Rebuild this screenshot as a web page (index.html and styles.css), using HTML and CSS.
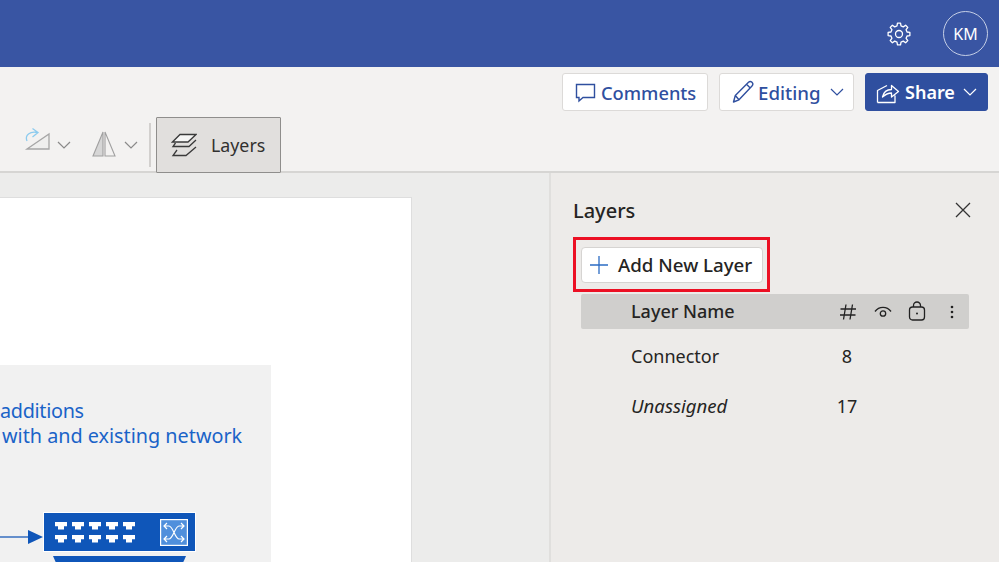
FILE: index.html
```html
<!DOCTYPE html>
<html lang="en">
<head>
<meta charset="utf-8">
<title>Layers</title>
<link rel="stylesheet" href="styles.css">
</head>
<body>
<header class="topbar">
  <svg class="gear" width="24" height="24" viewBox="0 0 24 24" fill="none" stroke="#fff" stroke-width="1.300" stroke-linejoin="round"><path d="M20.05 9.99L22.89 10.47V13.53L20.05 14.01L19.11 16.27L20.79 18.62L18.62 20.79L16.27 19.11L14.01 20.05L13.53 22.89H10.47L9.99 20.05L7.73 19.11L5.38 20.79L3.21 18.62L4.89 16.27L3.95 14.01L1.11 13.53V10.47L3.95 9.99L4.89 7.73L3.21 5.38L5.38 3.21L7.730 4.89L9.99 3.95L10.47 1.11H13.53L14.01 3.95L16.27 4.89L18.62 3.21L20.79 5.38L19.11 7.73z"/><circle cx="12" cy="12" r="3.500"/></svg>
  <div class="avatar">KM</div>
</header>
<section class="ribbon">
  <div class="ribbon-actions">
    <button class="action action-comments"><svg width="22" height="22" viewBox="0 0 22 22" fill="none" stroke="#2f4f9f" stroke-width="1.400"><path d="M1.500 3.500h18v13H8L4 20v-3.500H1.500z"/></svg>Comments</button>
    <button class="action action-edit"><svg width="24" height="24" viewBox="0 0 24 24" fill="none" stroke="#2f4f9f" stroke-width="1.400" stroke-linejoin="round"><path d="M2.500 22l1.800-6.500L17.500 2.300a2.500 2.500 0 0 1 3.500 0 2.600 2.600 0 0 1 0 3.600L8 19.800z M4.300 15.500L8 19.800 M15.500 4.300l4 4"/></svg>Editing<svg class="chev" width="14" height="14" viewBox="0 0 14 14" fill="none" stroke="#2f4f9f" stroke-width="1.200"><path d="M1 4l6 6 6-6"/></svg></button>
    <button class="action action-share"><svg width="24" height="24" viewBox="0 0 24 24" fill="none" stroke="#fff" stroke-width="1.300" stroke-linejoin="round"><path d="M1.500 22.500V10.500L11 5.500M1.500 22.500h17.500v-7M6.500 17c1-4.500 4.500-7.500 9-7.500V5.500l7 6-7 5.500v-4c-3.500 0-6 1.300-9 4z"/></svg>Share<svg class="chev" width="14" height="14" viewBox="0 0 14 14" fill="none" stroke="#fff" stroke-width="1.200"><path d="M1 4l6 6 6-6"/></svg></button>
  </div>
  <div class="ribbon-tools">
    <svg class="tool-icon" width="26" height="26" viewBox="0 0 26 26" fill="none"><path d="M2 20L24 5v15z" stroke="#a6a6a6" stroke-width="1.300" fill="#efefee"/><path d="M2 12C-.5 6 5 2 12.500 3.500M7.500-.5l5.500 4-5.500 4.500" stroke="#8ccbee" stroke-width="1.300"/></svg>
    <svg class="tool-chev" width="14" height="14" viewBox="0 0 14 14" fill="none" stroke="#8a8a8a" stroke-width="1.200"><path d="M1 4l6 6 6-6"/></svg>
    <svg class="tool-icon tool-flip" width="26" height="26" viewBox="0 0 26 26" fill="none" stroke="#a0a0a0" stroke-width="1.100"><path d="M11 1L1 25h10z" fill="#d6d6d6"/><path d="M13 1l10 24H13z" fill="#f3f2f1"/></svg>
    <svg class="tool-chev" width="14" height="14" viewBox="0 0 14 14" fill="none" stroke="#8a8a8a" stroke-width="1.200"><path d="M1 4l6 6 6-6"/></svg>
    <span class="divider"></span>
    <button class="layers-btn"><svg width="26" height="26" viewBox="0 0 26 26" fill="none" stroke="#3a3a3a" stroke-width="1.300"><path d="M9 2.500h16L17 10H1.500z" fill="#f6f6f5"/><path d="M4.500 11L2 14.500h16L25 8"/><path d="M6 18L2 23.500h13L25 15"/></svg>Layers</button>
  </div>
</section>
<main class="workspace">
  <div class="canvas">
    <div class="page">
      <div class="diagram">
        <p class="note"><span class="note-a">additions</span><span class="note-b">with and existing network</span></p>
        <div class="switch-row">
          <svg class="arrow" width="43" height="14" viewBox="0 0 43 14"><path d="M0 7h30" stroke="#1a5ab8" stroke-width="1.300"/><path d="M28 0l15 7-15 7z" fill="#0f56b9"/></svg>
          <div class="switch-wrap">
            <div class="switch">
              <div class="ports">
                <i></i><i></i><i></i><i></i><i></i><i></i><i></i><i></i><i></i><i></i>
              </div>
              <svg class="cross" width="28" height="27" viewBox="0 0 28 27" fill="none" stroke="#fff" stroke-width="1.200"><rect x=".6" y=".6" width="26.800" height="25.800" fill="#4f8fdc"/><path d="M4 7h5c4 0 6 13 10 13h5M4 20h5c4 0 6-13 10-13h5M7 4L4 7l3 3M21 4l3 3-3 3M7 17l-3 3 3 3M21 17l3 3-3 3"/></svg>
            </div>
            <div class="switch-base"></div>
          </div>
        </div>
      </div>
    </div>
  </div>
  <aside class="panel">
    <div class="panel-head">
      <h2>Layers</h2>
      <svg width="18" height="18" viewBox="0 0 18 18" fill="none" stroke="#333" stroke-width="1.300"><path d="M2 2l14 14M16 2L2 16"/></svg>
    </div>
    <div class="add-frame">
      <button class="add-btn"><svg width="20" height="20" viewBox="0 0 20 20" fill="none" stroke="#2b6cc4" stroke-width="1.300"><path d="M10 1v18M1 10h18"/></svg><span class="add-label">Add New Layer</span></button>
    </div>
    <div class="layer-head">
      <span class="col-name">Layer Name</span>
      <svg class="ic-hash" width="18" height="18" viewBox="0 0 18 18" fill="none" stroke="#222" stroke-width="1.300"><path d="M7 1.500L4.500 16.500M13.500 1.500L11 16.500M1.500 6h15.500M1 12h15.500"/></svg>
      <svg class="ic-eye" width="18" height="12" viewBox="0 0 18 12" fill="none" stroke="#222" stroke-width="1.300"><path d="M1 5.500C5 0 13 0 17 5.500"/><circle cx="9" cy="7.500" r="2.700"/></svg>
      <svg class="ic-lock" width="18" height="20" viewBox="0 0 18 20" fill="none" stroke="#222" stroke-width="1.300"><rect x="1.500" y="6" width="15" height="13" rx="3"/><path d="M5.500 6V4.500a3.500 3.500 0 0 1 7 0V6"/><circle cx="9" cy="12.500" r="1" fill="#222" stroke="none"/></svg>
      <svg class="ic-more" width="4" height="14" viewBox="0 0 4 14" fill="#222"><circle cx="2" cy="2" r="1.300"/><circle cx="2" cy="7" r="1.300"/><circle cx="2" cy="12" r="1.300"/></svg>
    </div>
    <div class="layer-row"><span class="col-name">Connector</span><span class="col-count">8</span></div>
    <div class="layer-row"><span class="col-name unassigned">Unassigned</span><span class="col-count">17</span></div>
  </aside>
</main>
</body>
</html>
```
FILE: styles.css
```css
* { box-sizing: border-box; }
html, body { margin: 0; padding: 0; }
body {
  width: 999px;
  height: 562px;
  overflow: hidden;
  font-family: "Noto Sans", "Open Sans", "Liberation Sans", sans-serif;
  background: #ececeb;
  color: #252423;
}
button { font-family: inherit; cursor: default; }

.topbar {
  height: 67px;
  background: #3955a3;
  display: flex;
  align-items: center;
  justify-content: flex-end;
  padding-right: 11px;
  gap: 32px;
}
.gear { display: block; margin-bottom: 0; }
.avatar {
  width: 45px;
  height: 45px;
  border-radius: 50%;
  border: 1px solid #c5cfe6;
  color: #fff;
  font-size: 16px;
  display: flex;
  align-items: center;
  justify-content: center;
}

.ribbon {
  height: 106px;
  background: #f3f2f1;
  border-bottom: 2px solid #d6d5d3;
  padding-top: 6px;
}
.ribbon-actions {
  display: flex;
  justify-content: flex-end;
  gap: 11px;
  padding-right: 11px;
}
.action {
  height: 38px;
  display: flex;
  align-items: center;
  padding: 0 0 0 12px;
  gap: 4px;
  background: #fff;
  border: 1px solid #dcdad8;
  border-radius: 3px;
  color: #2f4f9f;
  font-size: 18.300px;
  font-weight: 500;
  white-space: nowrap;
}
.action-comments { width: 146px; }
.action-edit { width: 135px; padding-left: 11px; gap: 3px; font-size: 18.700px; }
.action-edit .chev { margin-left: 6px; }
.action-share {
  width: 123px;
  background: #2f4f9f;
  border-color: #2f4f9f;
  color: #fff;
  font-weight: 600;
  font-size: 18px;
  padding-left: 10px;
  gap: 5px;
}
.action-share .chev { margin-left: 3px; }
.ribbon-tools {
  display: flex;
  align-items: center;
  height: 56px;
  margin-top: 6px;
  padding-left: 25px;
}
.tool-icon { overflow: visible; margin-bottom: 6px; }
.tool-chev { margin-left: 6px; }
.tool-flip { margin-left: 21px; margin-bottom: 2px; }
.divider {
  width: 2px;
  height: 44px;
  margin: 0 5px 0 11px;
  background: #d2d0ce;
}
.layers-btn {
  width: 125px;
  height: 56px;
  display: flex;
  align-items: center;
  gap: 14px;
  padding: 0 0 0 14px;
  background: #e1dfdd;
  border: 1px solid #8f8e8c;
  border-radius: 1px;
  color: #323130;
  font-size: 17.800px;
}

.workspace {
  display: flex;
  height: 389px;
}
.canvas {
  width: 549px;
  padding-top: 24px;
  background: #ececeb;
}
.page {
  width: 412px;
  height: 370px;
  background: #fff;
  border: 1px solid #dedede;
  border-left: 0;
  padding-top: 167px;
}
.diagram {
  width: 271px;
  height: 203px;
  background: #f1f1f1;
  padding-top: 33px;
}
.note {
  margin: 0;
  color: #1a63c8;
  font-size: 19.800px;
  line-height: 25px;
}
.note span { display: block; white-space: nowrap; }
.note-a { letter-spacing: -.3px; }
.note-b { padding-left: 2px; }
.switch-row {
  display: flex;
  align-items: flex-start;
  margin-top: 64px;
}
.arrow { margin-top: 18px; }
.switch-wrap { width: 153px; }
.switch {
  height: 40px;
  background: #0f56b9;
  border: 1px solid #fff;
  display: flex;
  align-items: center;
  justify-content: space-between;
  padding: 0 7px 0 11px;
}
.ports {
  display: grid;
  grid-template-columns: repeat(5, 12px);
  column-gap: 5px;
  row-gap: 5px;
}
.ports i {
  display: block;
  height: 8px;
  background: #fff;
  clip-path: polygon(0 0, 100% 0, 100% 60%, 75% 60%, 75% 100%, 25% 100%, 25% 60%, 0 60%);
}
.switch-base {
  height: 6px;
  margin: 4px 10px 0;
  background: #0f56b9;
  clip-path: polygon(0 0, 100% 0, 98% 100%, 2% 100%);
}

.panel {
  width: 450px;
  border-left: 2px solid #e0dfdd;
  background: #edebe9;
  padding: 0 30px 0 22px;
}
.panel-head {
  display: flex;
  align-items: center;
  justify-content: space-between;
  height: 64px;
  padding: 10px 0 0 0;
  margin-right: -3px;
}
.panel-head h2 {
  margin: 0;
  font-size: 20px;
  font-weight: 500;
  color: #252423;
}
.add-frame {
  width: 197px;
  height: 55px;
  border: 3px solid #ec1024;
  padding: 7px 5px;
}
.add-btn {
  width: 182px;
  height: 36px;
  display: flex;
  align-items: center;
  gap: 9px;
  padding: 0 0 0 7px;
  background: #fff;
  border: 1px solid #d6d4d2;
  border-radius: 4px;
  color: #252423;
  font-size: 18.700px;
  font-weight: 500;
  white-space: nowrap;
}
.add-label { margin-bottom: 2px; }
.layer-head {
  width: 388px;
  height: 35px;
  margin: 2px 0 0 8px;
  display: flex;
  align-items: center;
  background: #d0cfcd;
  border-radius: 2px;
  padding-left: 50px;
  font-size: 18px;
  font-weight: 500;
}
.layer-head .col-name { width: 208px; margin-bottom: 2px; }
.ic-eye { margin-left: 17px; }
.ic-lock { margin-left: 16px; margin-bottom: 2px; }
.ic-more { margin-left: 24px; }
.layer-row {
  display: flex;
  align-items: center;
  height: 50px;
  margin-left: 8px;
  padding-left: 50px;
  font-size: 18px;
}
.layer-head + .layer-row { margin-top: 2px; }
.layer-row .col-name { width: 200px; }
.col-count { width: 32px; text-align: center; }
.unassigned { font-style: italic; font-size: 18.600px; margin-bottom: 2px; }
```
